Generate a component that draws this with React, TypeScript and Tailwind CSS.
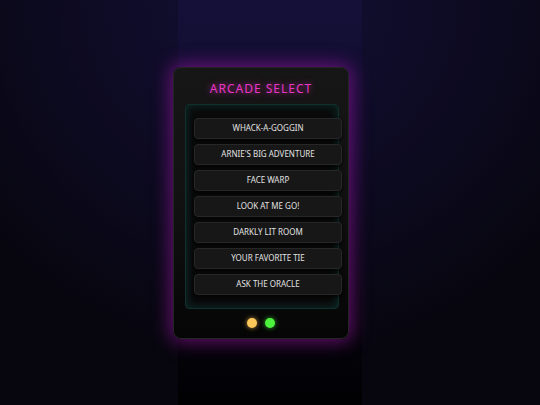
import React from 'react'

const games = [
  'Whack-a-Goggin',
  "Arnie's Big Adventure",
  'Face Warp',
  'Look at Me Go!',
  'Darkly Lit Room',
  'Your Favorite Tie',
  'Ask the Oracle',
]

export default function App() {
  return (
    <div className="flex h-[405px] w-full justify-center overflow-hidden bg-[radial-gradient(ellipse_70%_90%_at_50%_0%,#141036_0%,#0e0b25_45%,#07060e_100%)] font-['Noto_Sans',sans-serif]">
      <div className="flex h-full w-[184px] flex-col justify-center bg-[linear-gradient(to_bottom,#151038_0%,#0f0b2a_35%,#06050e_75%,#010103_100%)]">
        <div className="ml-[-5px] flex w-[176px] flex-col items-center rounded-[8px] border border-[#252525] bg-[linear-gradient(to_bottom,#161616_0%,#111111_50%,#050505_100%)] px-[11px] pb-[10px] pt-[12px] shadow-[0_0_18px_3px_rgba(160,20,170,0.6)]">
          <h1 className="mb-[7px] text-[12px] leading-[17px] tracking-[1px] text-[#e936c6] [text-shadow:0_0_6px_rgba(233,54,198,0.8)]">
            ARCADE SELECT
          </h1>
          <div className="flex h-[205px] w-[154px] flex-col gap-[5px] self-stretch rounded-[4px] border border-[#10302c] bg-[#0a0a0a] pl-[8px] pt-[13px] shadow-[inset_0_0_10px_rgba(20,140,130,0.3)]">
            {games.map(g => (
              <button
                key={g}
                type="button"
                className="h-[21px] w-[148px] shrink-0 rounded-[4px] border border-[#272727] bg-[#171717] text-[8px] uppercase text-[#e2e2e2] shadow-[0_2px_4px_rgba(0,0,0,0.8)]"
              >
                {g}
              </button>
            ))}
          </div>
          <div className="mt-[9px] flex gap-[8px]">
            <span className="h-[10px] w-[10px] rounded-full bg-[#ffc85a] shadow-[0_0_5px_rgba(255,200,90,0.7)]" />
            <span className="h-[10px] w-[10px] rounded-full bg-[#4cf23c] shadow-[0_0_5px_rgba(76,242,60,0.7)]" />
          </div>
        </div>
      </div>
    </div>
  )
}
